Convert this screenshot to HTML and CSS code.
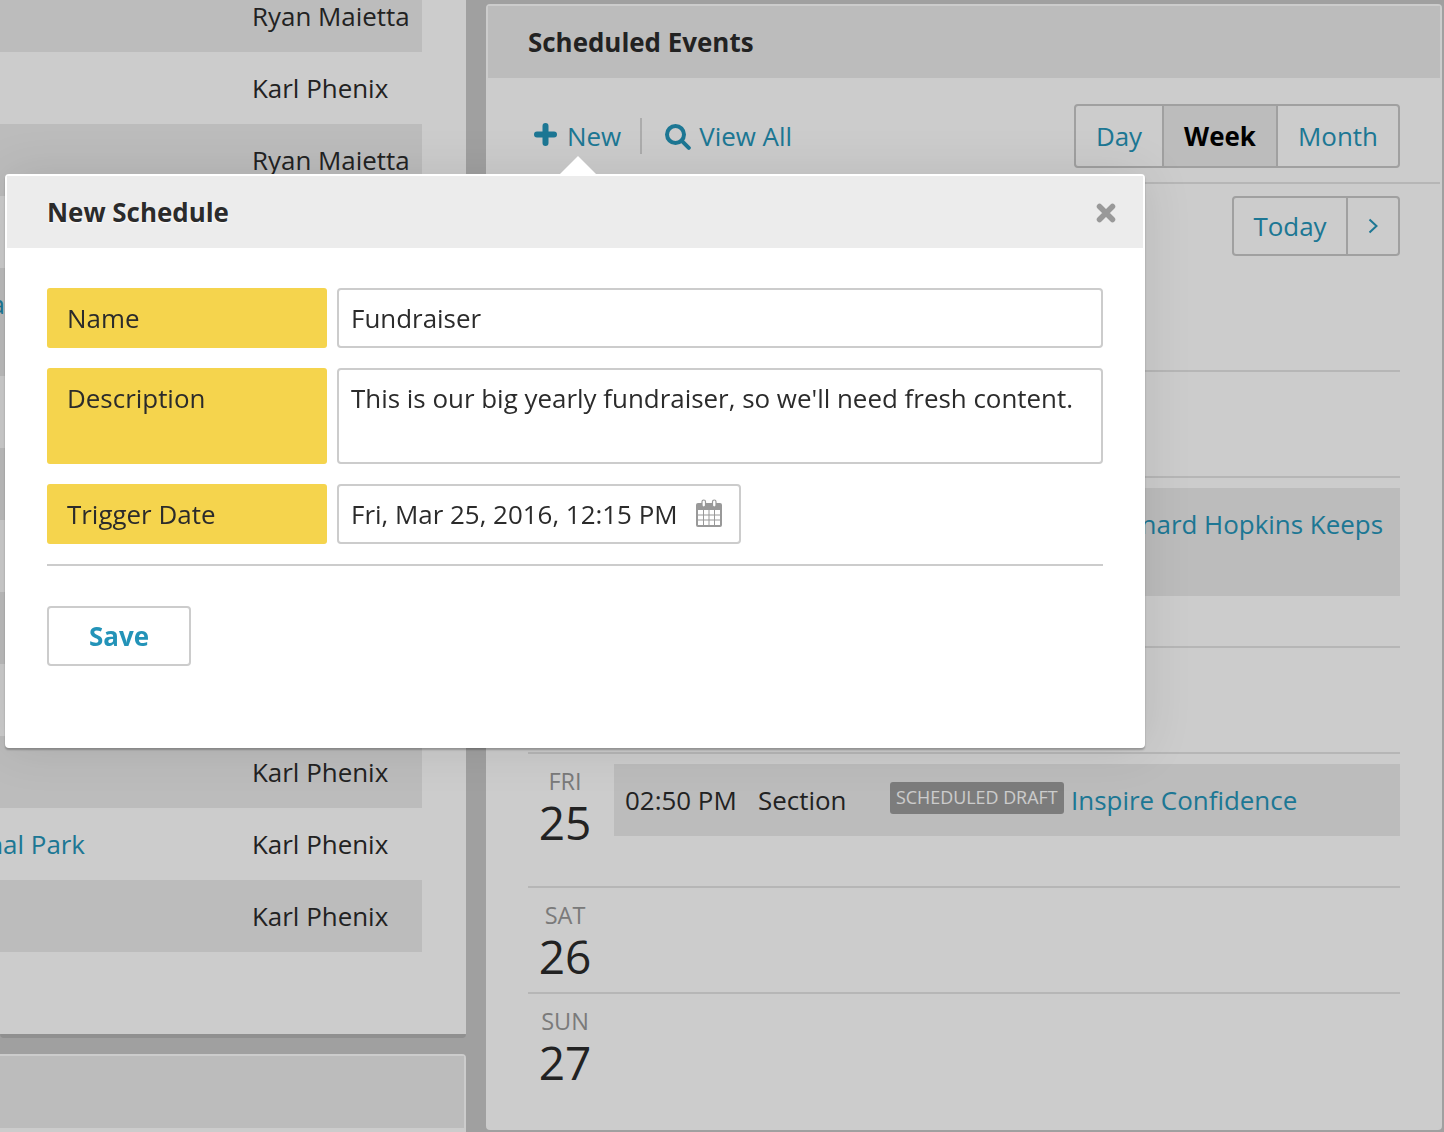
FILE: index.html
```html
<!DOCTYPE html>
<html>

    <head>
        <meta charset="utf-8">
        <link rel="stylesheet" href="styles.css">
    </head>

    <body>
        <div class="page">
            <div class="left-col">
                <div class="panel list-panel">
                    <div class="list-row"><span class="author">Ryan Maietta</span></div>
                    <div class="list-row"><span class="author">Karl Phenix</span></div>
                    <div class="list-row"><span class="author">Ryan Maietta</span></div>
                    <div class="list-row"></div>
                    <div class="list-row list-row-tall"><a class="row-title row-title-stub">a</a></div>
                    <div class="list-row"></div>
                    <div class="list-row"></div>
                    <div class="list-row"></div>
                    <div class="list-row"></div>
                    <div class="list-row"></div>
                    <div class="list-row"><span class="author">Karl Phenix</span></div>
                    <div class="list-row"><a class="row-title">nal Park</a><span class="author">Karl Phenix</span></div>
                    <div class="list-row"><span class="author">Karl Phenix</span></div>
                </div>
                <div class="panel second-panel">
                    <div class="panel-head"></div>
                </div>
            </div>

            <div class="panel events-panel">
                <div class="panel-head"><h2>Scheduled Events</h2></div>
                <div class="toolbar">
                    <a class="tool-link">
                        <svg class="icon-plus" viewBox="0 0 23 23"><path d="M11.5 3v17M3 11.5h17" /></svg>
                        New
                    </a>
                    <span class="tool-sep"></span>
                    <a class="tool-link">
                        <svg class="icon-search" viewBox="0 0 27 27"><circle cx="11.5" cy="11.5" r="8.5" /><path d="M17.8 17.8l7 7" /></svg>
                        View All
                    </a>
                    <div class="btn-group toolbar-views">
                        <a class="btn btn-day">Day</a>
                        <a class="btn btn-week active">Week</a>
                        <a class="btn btn-month">Month</a>
                    </div>
                </div>

                <div class="calendar">
                    <div class="cal-nav">
                        <div class="btn-group">
                            <a class="btn btn-today">Today</a>
                            <a class="btn btn-next">
                                <svg class="icon-next" viewBox="0 0 10 16"><path d="M1.5 1.5L8.5 8l-7 6.5" /></svg>
                            </a>
                        </div>
                    </div>

                    <div class="day day-first"><div class="day-label"></div><div class="day-events"></div></div>
                    <div class="day"><div class="day-label"></div><div class="day-events"></div></div>
                    <div class="day">
                        <div class="day-label"></div>
                        <div class="day-events">
                            <div class="event event-tall"><a class="event-link">nard Hopkins Keeps</a></div>
                        </div>
                    </div>
                    <div class="day"><div class="day-label"></div><div class="day-events"></div></div>
                    <div class="day">
                        <div class="day-label">
                            <div class="day-name">FRI</div>
                            <div class="day-num">25</div>
                        </div>
                        <div class="day-events">
                            <div class="event">
                                <span class="event-time">02:50 PM</span>
                                <span class="event-type">Section</span>
                                <span class="badge">SCHEDULED DRAFT</span>
                                <a class="event-title">Inspire Confidence</a>
                            </div>
                        </div>
                    </div>
                    <div class="day">
                        <div class="day-label">
                            <div class="day-name">SAT</div>
                            <div class="day-num">26</div>
                        </div>
                        <div class="day-events"></div>
                    </div>
                    <div class="day">
                        <div class="day-label">
                            <div class="day-name">SUN</div>
                            <div class="day-num">27</div>
                        </div>
                        <div class="day-events"></div>
                    </div>
                </div>
            </div>
        </div>

        <div class="overlay"></div>

        <div class="modal">
            <div class="modal-head">
                <h2>New Schedule</h2>
                <svg class="icon-close" viewBox="0 0 20 20"><path d="M3.5 3.5l13 13M16.5 3.5l-13 13" /></svg>
            </div>
            <div class="modal-body">
                <div class="field">
                    <div class="field-label">Name</div>
                    <div class="field-input">Fundraiser</div>
                </div>
                <div class="field field-tall">
                    <div class="field-label">Description</div>
                    <div class="field-input">This is our big yearly fundraiser, so we'll need fresh content.</div>
                </div>
                <div class="field">
                    <div class="field-label">Trigger Date</div>
                    <div class="field-input field-date">
                        Fri, Mar 25, 2016, 12:15 PM
                        <svg class="icon-cal" viewBox="0 0 26 28">
                            <rect x="0" y="4" width="26" height="24" rx="2" fill="#999" />
                            <rect x="2" y="11" width="22" height="15" fill="#fff" />
                            <path class="cal-grid" d="M7.5 11v15M13 11v15M18.5 11v15M2 16h22M2 21h22" />
                            <rect class="cal-ring" x="6" y="1" width="3.5" height="7" rx="1.7" />
                            <rect class="cal-ring" x="16.5" y="1" width="3.5" height="7" rx="1.7" />
                        </svg>
                    </div>
                </div>
                <div class="modal-rule"></div>
                <a class="btn-save">Save</a>
            </div>
        </div>
    </body>

</html>
```

FILE: styles.css
```css
html,
body {
    margin: 0;
    height: 1132px;
    overflow: hidden;
}

body {
    background: #c8c8c8;
    color: #2b2b2b;
    font-family: "Open Sans", "Liberation Sans", sans-serif;
    font-size: 25.93px;
    line-height: 40px;
}

a {
    color: #2595b9;
}

h2 {
    margin: 0;
    font-size: 25.93px;
    font-weight: 700;
}

.page {
    display: flex;
    gap: 20px;
    align-items: flex-start;
    height: 1132px;
    overflow: hidden;
}

.overlay {
    position: fixed;
    top: 0;
    right: 0;
    bottom: 0;
    left: 0;
    background: rgba(0, 0, 0, 0.2);
}

.panel {
    box-sizing: border-box;
    background: #fff;
    border: 2px solid #fff;
    border-radius: 4px;
}

.panel-head {
    height: 72px;
    padding-left: 40px;
    background: #ebebeb;
    line-height: 72px;
}

.left-col {
    flex: none;
    width: 466px;
    margin-top: -20px;
}

.list-panel {
    padding: 0 0 82px;
    border-width: 0 0 4px;
    border-bottom-color: #b4b4b4;
}

.list-row {
    display: flex;
    box-sizing: border-box;
    width: 422px;
    height: 72px;
    padding-top: 16px;
    white-space: nowrap;
}

.list-row:nth-child(odd) {
    background: #ebebeb;
}

.list-row-tall {
    height: 108px;
}

.row-title {
    display: flex;
    justify-content: flex-end;
    flex: none;
    width: 85px;
}

.row-title-stub {
    width: 5px;
}

.author {
    margin-left: auto;
    width: 170px;
}

/* the panel runs on past the left edge of the window */
.second-panel {
    height: 200px;
    margin: 16px 0 0 -10px;
}

.events-panel {
    flex: none;
    width: 956px;
    height: 1126px;
    margin-top: 4px;
}

.toolbar {
    display: flex;
    align-items: center;
    box-sizing: border-box;
    height: 106px;
    padding: 26px 40px 14px 46px;
    border-bottom: 2px solid #e4e4e4;
}

.tool-link {
    display: flex;
    align-items: center;
}

.tool-sep {
    width: 2px;
    height: 36px;
    margin: 0 22px 0 19px;
    background: #d8d8d8;
}

.icon-plus {
    width: 23px;
    height: 23px;
    margin: 0 10px 4px 0;
    fill: none;
    stroke: #2595b9;
    stroke-width: 6;
    stroke-linecap: round;
}

.icon-search {
    width: 27px;
    height: 27px;
    margin-right: 8px;
    fill: none;
    stroke: #2595b9;
    stroke-width: 4;
    stroke-linecap: round;
}

.btn-group {
    display: flex;
    border: 2px solid #c8c8c8;
    border-radius: 4px;
}

.toolbar-views {
    margin-left: auto;
}

.btn {
    display: flex;
    align-items: center;
    justify-content: center;
    box-sizing: border-box;
    height: 60px;
}

.btn + .btn {
    border-left: 2px solid #c8c8c8;
}

.btn-day {
    width: 86px;
}

.btn-week {
    width: 114px;
}

.btn-month {
    width: 122px;
}

.active {
    background: #ebebeb;
    color: #000;
    font-weight: 700;
}

.calendar {
    padding: 12px 40px 0;
}

.cal-nav {
    display: flex;
    justify-content: flex-end;
    margin-bottom: 10px;
}

.cal-nav .btn {
    height: 56px;
}

.btn-today {
    width: 112px;
}

.btn-next {
    width: 52px;
}

.icon-next {
    width: 10px;
    height: 16px;
    fill: none;
    stroke: #2595b9;
    stroke-width: 2;
}

.day {
    display: flex;
    padding-top: 10px;
    border-top: 2px solid #e4e4e4;
}

.day-first {
    border-top: 0;
}

.day-label {
    flex: none;
    width: 74px;
    min-height: 94px;
    margin-right: 12px;
    text-align: center;
}

.day-name {
    color: #999;
    font-size: 23.5px;
    line-height: 34px;
}

.day-num {
    font-size: 46px;
    line-height: 49px;
}

.day-events {
    flex: 1;
}

.event {
    display: flex;
    align-items: flex-start;
    box-sizing: border-box;
    height: 72px;
    margin-bottom: 50px;
    padding: 16px 0 0 11px;
    background: #ebebeb;
    white-space: nowrap;
}

.event-tall {
    height: 108px;
    justify-content: flex-end;
    padding-right: 17px;
}

.event-time {
    width: 133px;
}

.event-type {
    width: 132px;
}

.badge {
    margin: 2px 7.5px 0 0;
    padding: 0 6px 2px;
    background: #9c9c9c;
    border-radius: 3px;
    color: #fff;
    font-size: 17.9px;
    line-height: 30px;
}

.modal {
    position: absolute;
    top: 174px;
    left: 5px;
    box-sizing: border-box;
    width: 1140px;
    height: 574px;
    background: #fff;
    border: 2px solid #fff;
    border-radius: 4px;
    box-shadow: 0 2px 2px rgba(0, 0, 0, 0.25), 0 0 50px rgba(0, 0, 0, 0.1);
}

.modal::before {
    content: "";
    position: absolute;
    top: -20px;
    left: 553px;
    border-right: 18px solid transparent;
    border-bottom: 18px solid #fff;
    border-left: 18px solid transparent;
}

.modal-head {
    display: flex;
    align-items: center;
    justify-content: space-between;
    box-sizing: border-box;
    height: 72px;
    padding: 0 27px 0 40px;
    background: #ececec;
}

.modal-head h2 {
    text-shadow: 0 1px 2px #fff;
}

.icon-close {
    width: 20px;
    height: 20px;
    margin-top: 2px;
    fill: none;
    stroke: #999;
    stroke-width: 5.5;
    stroke-linecap: round;
}

.modal-body {
    display: flex;
    flex-direction: column;
    gap: 20px;
    padding: 40px;
}

.field {
    display: flex;
    gap: 10px;
    height: 60px;
}

.field-tall {
    height: 96px;
}

.field-label {
    box-sizing: border-box;
    flex: none;
    width: 280px;
    padding: 10px 20px 0;
    background: #f5d44d;
    border-radius: 3px;
}

.field-input {
    box-sizing: border-box;
    flex: 1;
    padding: 8px 12px 0;
    border: 2px solid #ccc;
    border-radius: 4px;
}

.field-date {
    display: flex;
    justify-content: space-between;
    flex: none;
    width: 404px;
    padding-right: 17px;
}

.icon-cal {
    width: 26px;
    height: 28px;
    margin-top: 5px;
}

.cal-grid {
    fill: none;
    stroke: #999;
    stroke-width: 1;
}

.cal-ring {
    fill: #fff;
    stroke: #999;
    stroke-width: 1.2;
}

.modal-rule {
    height: 2px;
    background: #ccc;
}

.btn-save {
    box-sizing: border-box;
    width: 144px;
    height: 60px;
    margin-top: 20px;
    border: 2px solid #ccc;
    border-radius: 4px;
    color: #2393b8;
    font-weight: 700;
    line-height: 56px;
    text-align: center;
}
```
